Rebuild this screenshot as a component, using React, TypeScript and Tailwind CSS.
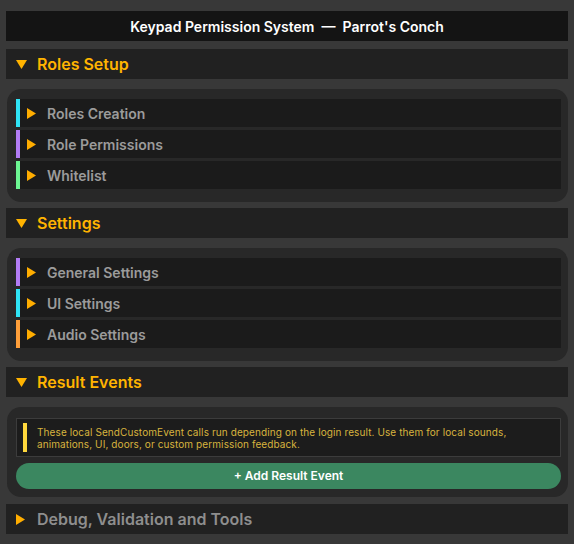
import type { ReactNode } from 'react';

type SubItem = { label: string; bar: string };

const ROLES_ITEMS: SubItem[] = [
  { label: 'Roles Creation', bar: 'bg-[#2fe3f5]' },
  { label: 'Role Permissions', bar: 'bg-[#b27cf5]' },
  { label: 'Whitelist', bar: 'bg-[#6cf592]' },
];

const SETTINGS_ITEMS: SubItem[] = [
  { label: 'General Settings', bar: 'bg-[#b27cf5]' },
  { label: 'UI Settings', bar: 'bg-[#2fe3f5]' },
  { label: 'Audio Settings', bar: 'bg-[#ff9f3a]' },
];

function TriDown() {
  return (
    <svg width="11" height="9" viewBox="0 0 11 9" className="shrink-0">
      <polygon points="0,0 11,0 5.5,9" fill="#ffb300" />
    </svg>
  );
}

function TriRight() {
  return (
    <svg width="9" height="11" viewBox="0 0 9 11" className="shrink-0">
      <polygon points="0,0 9,5.5 0,11" fill="#ffad00" />
    </svg>
  );
}

function SectionHeader({ title, open }: { title: string; open: boolean }) {
  return (
    <div className="flex h-[30px] items-center bg-[#212121] pl-[10px]">
      {open ? <TriDown /> : <TriRight />}
      <span
        className={`text-[16px] font-semibold ${open ? 'ml-[10px] text-[#ffb400]' : 'ml-[12px] text-[#8e8e8e]'}`}
      >
        {title}
      </span>
    </div>
  );
}

function Box({ children, className = '' }: { children: ReactNode; className?: string }) {
  return (
    <div className={`ml-px rounded-[14px] bg-[#282828] pl-[9px] pr-[7px] ${className}`}>{children}</div>
  );
}

function SubRow({ item }: { item: SubItem }) {
  return (
    <div className="flex h-[28px] items-stretch">
      <div className={`w-[4px] ${item.bar}`} />
      <div className="flex flex-1 items-center bg-[#1b1b1b] pl-[7px]">
        <TriRight />
        <span className="ml-[11px] text-[14px] font-semibold text-[#9b9b9b]">{item.label}</span>
      </div>
    </div>
  );
}

export default function App() {
  return (
    <div
      className="min-h-[544px] bg-[#383838] px-[6px] pt-[11px]"
      style={{ fontFamily: 'Inter, "Noto Sans", sans-serif' }}
    >
      <div className="flex h-[30px] items-center justify-center bg-[#141414] text-[14px] font-semibold text-white">
        Keypad Permission System{'\u00A0 —\u00A0 '}Parrot's Conch
      </div>

      <div className="mt-[8px]">
        <SectionHeader title="Roles Setup" open />
      </div>
      <Box className="mt-[10px] pb-[13px] pt-[10px]">
        <div className="flex flex-col gap-[3px]">
          {ROLES_ITEMS.map((it) => (
            <SubRow key={it.label} item={it} />
          ))}
        </div>
      </Box>

      <div className="mt-[6px]">
        <SectionHeader title="Settings" open />
      </div>
      <Box className="mt-[10px] pb-[13px] pt-[10px]">
        <div className="flex flex-col gap-[3px]">
          {SETTINGS_ITEMS.map((it) => (
            <SubRow key={it.label} item={it} />
          ))}
        </div>
      </Box>

      <div className="mt-[6px]">
        <SectionHeader title="Result Events" open />
      </div>
      <Box className="mt-[10px] pb-[8px] pt-[11px]">
        {/* info message */}
        <div className="flex h-[39px] items-center border border-[#3c3c3c] bg-[#1c1c1c] pl-[6px]">
          <div className="h-[29px] w-[4px] shrink-0 bg-[#ffd83d]" />
          <p className="ml-[10px] text-[10px] leading-[12px] tracking-[0.1px] text-[#d8b43e]">
            These local SendCustomEvent calls run depending on the login result. Use them for local sounds,
            <br />
            animations, UI, doors, or custom permission feedback.
          </p>
        </div>
        <button
          type="button"
          className="mt-[6px] flex h-[26px] w-full items-center justify-center rounded-full bg-[#3b8760] text-[12px] font-semibold text-white"
        >
          + Add Result Event
        </button>
      </Box>

      <div className="mt-[7px]">
        <SectionHeader title="Debug, Validation and Tools" open={false} />
      </div>
    </div>
  );
}
